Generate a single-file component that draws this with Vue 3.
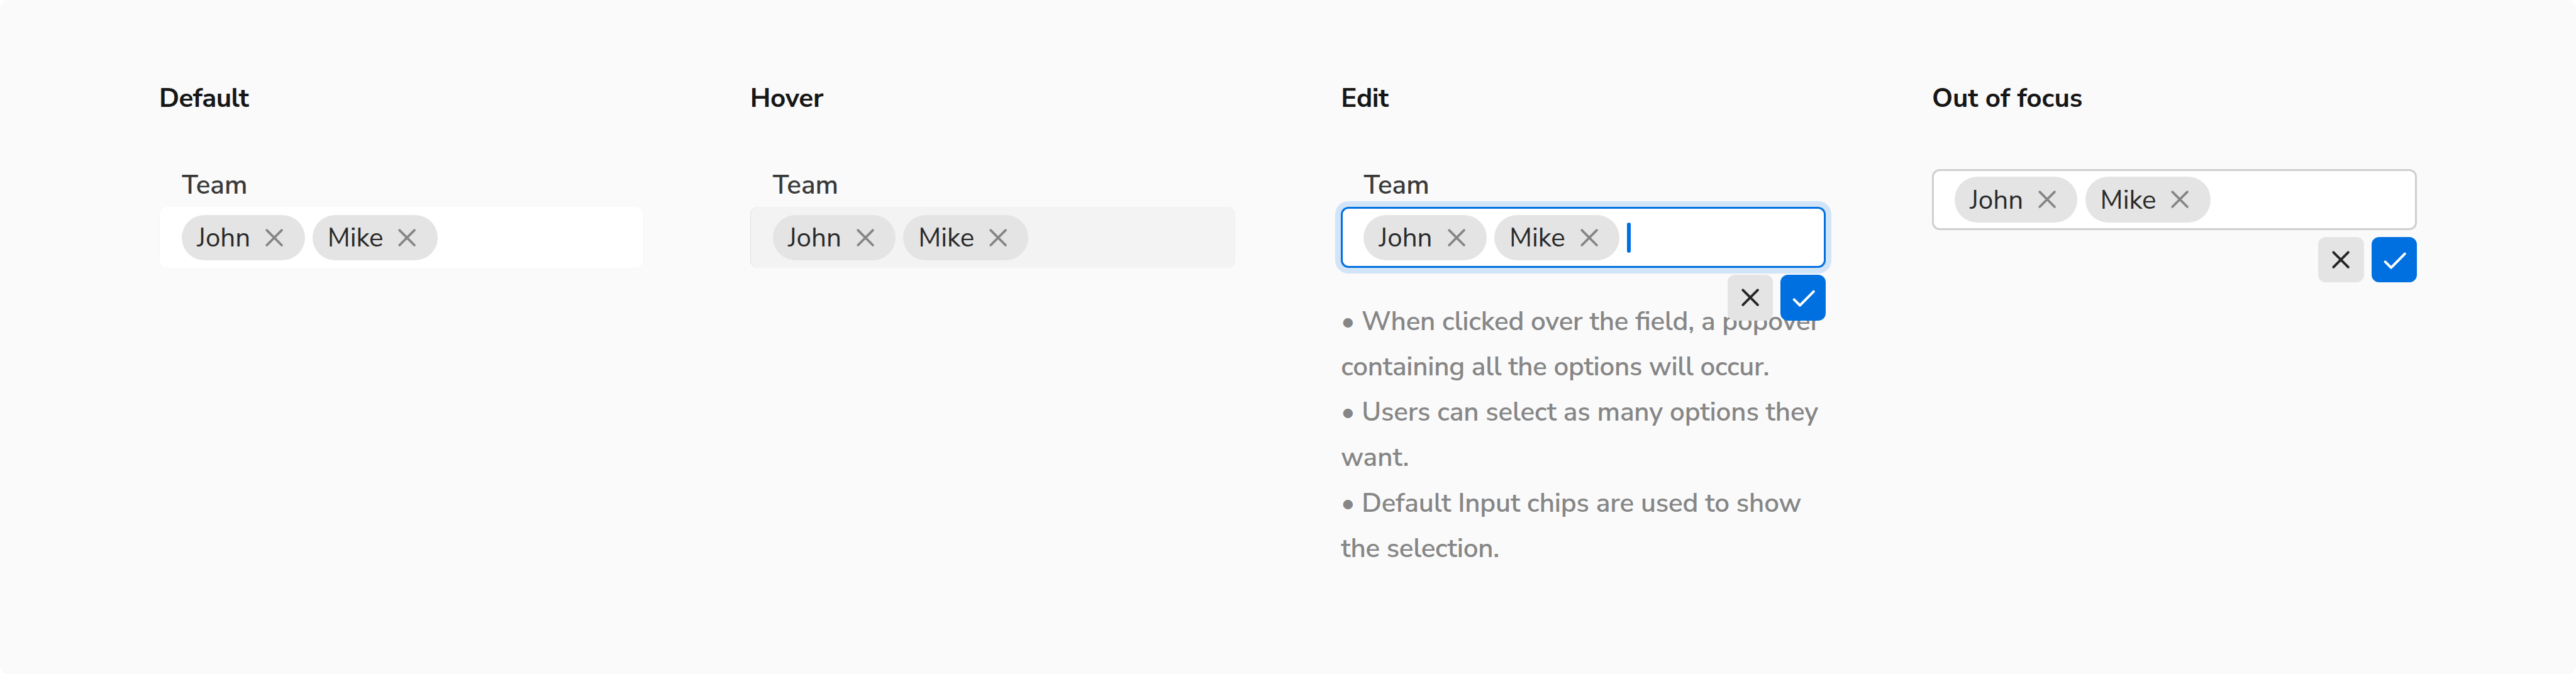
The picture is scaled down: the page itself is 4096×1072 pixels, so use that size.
<script setup>
const members = ['John', 'Mike']

const states = [
  { title: 'Default', tracking: -0.014, kind: 'default', label: 'Team' },
  { title: 'Hover', tracking: -0.005, kind: 'hover', label: 'Team' },
  {
    title: 'Edit',
    tracking: -0.01,
    kind: 'edit',
    label: 'Team',
    caret: true,
    actions: true,
    notes: [
      [
        { text: '• When clicked over the field, a popover', tracking: -0.0045 },
        { text: 'containing all the options will occur.', tracking: -0.0066 },
      ],
      [
        { text: '• Users can select as many options they', tracking: -0.0034 },
        { text: 'want.', tracking: 0 },
      ],
      [
        { text: '• Default Input chips are used to show', tracking: -0.0037 },
        { text: 'the selection.', tracking: -0.006 },
      ],
    ],
  },
  { title: 'Out of focus', tracking: -0.001, kind: 'blurred', actions: true },
]
</script>

<template>
  <main class="board">
    <section v-for="s in states" :key="s.title" class="state">
      <h2 class="title" :style="{ letterSpacing: s.tracking + 'em' }">{{ s.title }}</h2>
      <div class="control" :class="{ labelled: s.label }">
        <label v-if="s.label" class="label">{{ s.label }}</label>
        <div class="field" :class="s.kind">
          <span v-for="m in members" :key="m" class="chip">
            <span class="name">{{ m }}</span>
            <svg class="icon remove" viewBox="0 0 16 16">
              <path d="M4.05 4.05l7.9 7.9M11.95 4.05l-7.9 7.9" />
            </svg>
          </span>
          <i v-if="s.caret" class="caret"></i>
          <div v-if="s.actions" class="actions">
            <button class="action cancel" type="button" aria-label="Cancel">
              <svg class="icon" viewBox="0 0 16 16">
                <path d="M4.1 4.1l7.8 7.8M11.9 4.1l-7.8 7.8" />
              </svg>
            </button>
            <button class="action accept" type="button" aria-label="Save">
              <svg class="icon" viewBox="0 0 16 16">
                <path d="M3.2 9.1l3.15 3.1 7.2-7.35" />
              </svg>
            </button>
          </div>
        </div>
      </div>
      <div v-if="s.notes" class="notes">
        <p v-for="(note, i) in s.notes" :key="i">
          <span
            v-for="line in note"
            :key="line.text"
            class="line"
            :style="{ letterSpacing: line.tracking + 'em' }"
          >{{ line.text }}</span>
        </p>
      </div>
    </section>
  </main>
</template>

<style>
html,
body {
  margin: 0;
  background: #fff;
}
</style>

<style scoped>
.board {
  --u: calc(100vw / 1360);
  box-sizing: border-box;
  width: 100vw;
  height: 100vh;
  overflow: hidden;
  display: flex;
  gap: calc(56 * var(--u));
  padding: calc(39.7 * var(--u)) calc(84 * var(--u)) 0;
  background: #fafafa;
  border-radius: calc(4 * var(--u));
  font-family: "Nunito Sans", Nunito, Lato, sans-serif;
  font-size: calc(14 * var(--u));
  line-height: calc(24 * var(--u));
  font-feature-settings: "liga" 1;
  color: #2e2e2e;
}
.state {
  flex: none;
  width: calc(256 * var(--u));
}
.title {
  margin: 0;
  font-size: inherit;
  font-weight: 700;
  color: #171717;
}
.control {
  padding-top: calc(25.7 * var(--u));
}
.control.labelled {
  padding-top: calc(22.1 * var(--u));
}
.label {
  display: block;
  height: calc(23.6 * var(--u));
  padding-left: calc(12 * var(--u));
  font-weight: 600;
  color: #3a3a3a;
}
.field {
  position: relative;
  box-sizing: border-box;
  display: flex;
  align-items: center;
  gap: calc(4 * var(--u));
  height: calc(32 * var(--u));
  padding-left: calc(12 * var(--u));
  border-radius: calc(4 * var(--u));
  background: #fff;
}
.field.default {
  box-shadow: inset 1px 0 0 #f4f4f4, inset -1px 0 0 #f4f4f4;
}
.field.hover {
  background: #f3f3f3;
  box-shadow: inset 1px 0 0 #e2e2e2, inset -1px 0 0 #eeeeee;
}
.field.edit {
  box-shadow:
    inset 0 0 0 calc(1 * var(--u)) #0070e0,
    0 0 0 calc(3 * var(--u)) #d2e4f7;
}
.field.blurred {
  box-shadow: inset 0 0 0 calc(1 * var(--u)) #cfcfcf;
}
.chip {
  display: flex;
  align-items: center;
  box-sizing: border-box;
  height: calc(24 * var(--u));
  padding: 0 calc(8 * var(--u));
  border-radius: calc(12 * var(--u));
  background: #e4e4e4;
  color: #2a2a2a;
}
.name {
  margin-right: calc(4.65 * var(--u));
  padding-top: calc(0.4 * var(--u));
}
.icon {
  display: block;
  width: calc(16 * var(--u));
  height: calc(16 * var(--u));
  fill: none;
  stroke: currentColor;
  stroke-width: 1.25;
  stroke-linecap: round;
  stroke-linejoin: round;
}
.remove {
  color: #858585;
}
.caret {
  width: calc(2 * var(--u));
  height: calc(16 * var(--u));
  border-radius: calc(1 * var(--u));
  background: #0070e0;
}
.actions {
  position: absolute;
  top: calc(35.8 * var(--u));
  right: 0;
  z-index: 1;
  display: flex;
  gap: calc(4 * var(--u));
}
.action {
  display: flex;
  align-items: center;
  justify-content: center;
  width: calc(24 * var(--u));
  height: calc(24 * var(--u));
  padding: 0;
  border: 0;
  border-radius: calc(4 * var(--u));
}
.action .icon {
  stroke-width: 1.3;
}
.cancel {
  background: #e4e4e4;
  color: #262626;
}
.accept {
  background: #0070e0;
  color: #fff;
}
.notes {
  margin-top: calc(16.2 * var(--u));
  font-weight: 600;
  color: #868686;
}
.notes p {
  margin: 0;
}
.line {
  display: block;
  white-space: nowrap;
}
</style>
